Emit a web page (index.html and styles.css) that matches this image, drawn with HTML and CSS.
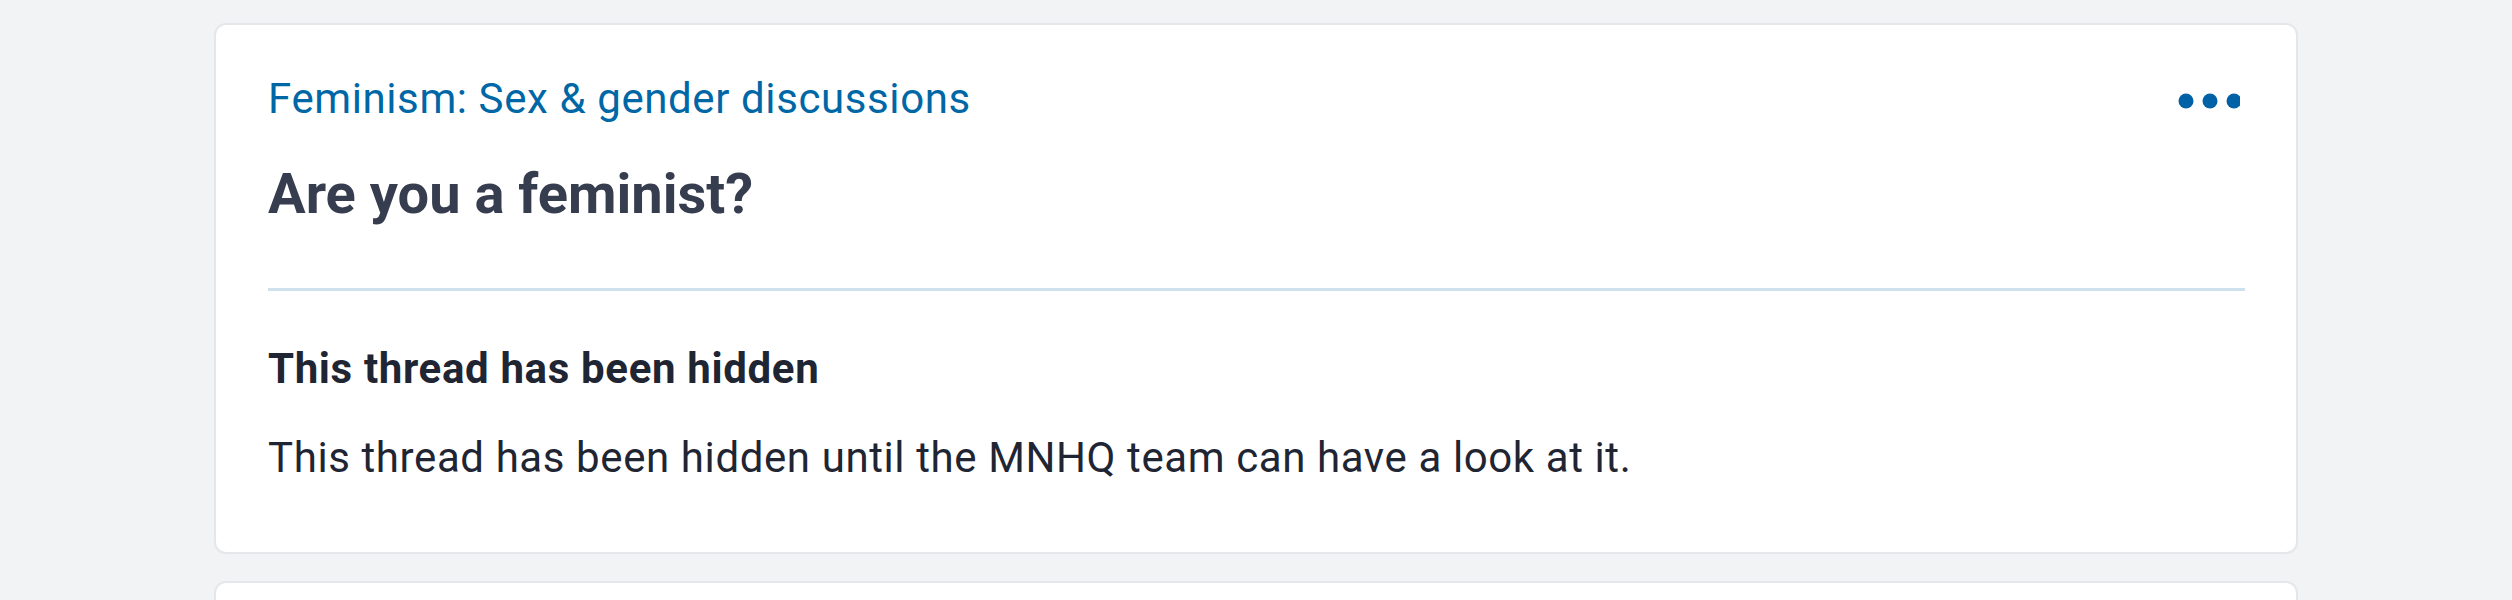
FILE: index.html
```html
<!DOCTYPE html>
<html lang="en">
<head>
<meta charset="utf-8">
<title>Are you a feminist?</title>
<link rel="stylesheet" href="styles.css">
</head>
<body>
<main class="feed">
  <article class="card">
    <header class="card-head">
      <div class="head-row">
        <a class="topic" href="#">Feminism: Sex &amp; gender discussions</a>
        <button class="more" aria-label="More options">
          <svg width="62" height="16" viewBox="0 0 62 16" aria-hidden="true">
            <circle cx="8" cy="8" r="7.5" fill="#0061a6"/>
            <circle cx="32" cy="8" r="7.5" fill="#0061a6"/>
            <circle cx="56" cy="8" r="7.5" fill="#0061a6"/>
          </svg>
        </button>
      </div>
      <h1 class="title">Are you a feminist?</h1>
    </header>
    <section class="card-body">
      <h2 class="notice-title">This thread has been hidden</h2>
      <p class="notice-text">This thread has been hidden until the MNHQ team can have a look at it.</p>
    </section>
  </article>
  <article class="card card-next"></article>
</main>
</body>
</html>
```
FILE: styles.css
```css
html, body {
  margin: 0;
  padding: 0;
  background: #f2f3f5;
  font-family: Roboto, "Liberation Sans", Arial, sans-serif;
}

body {
  height: 600px;
  overflow: hidden;
}

.feed {
  width: 2084px;
  margin-left: 214px;
  padding-top: 23px;
  display: flex;
  flex-direction: column;
  gap: 27px;
}

.card {
  box-sizing: border-box;
  background: #ffffff;
  border: 2px solid #e5e7eb;
  border-radius: 12px;
  padding: 42px 51px 63px 52px;
}

.card-next {
  height: 20px;
  padding: 0;
  flex-shrink: 0;
  border-bottom: 0;
  border-radius: 12px 12px 0 0;
}

.card-head {
  border-bottom: 3px solid #cfe1ec;
  padding-bottom: 55px;
}

.head-row {
  display: flex;
  justify-content: space-between;
  align-items: flex-start;
}

.topic {
  font-size: 42px;
  line-height: 63px;
  letter-spacing: 0.6px;
  color: #0067a6;
  text-decoration: none;
}

.more {
  border: 0;
  background: none;
  padding: 0;
  margin: 26px 5px 0 0;
  display: flex;
  cursor: pointer;
}

.title {
  margin: 25px 0 0;
  font-size: 56px;
  line-height: 78px;
  font-weight: 700;
  color: #363d4f;
}

.card-body {
  padding-top: 46px;
}

.notice-title {
  margin: 0;
  font-size: 42px;
  line-height: 63px;
  font-weight: 700;
  letter-spacing: 0.65px;
  color: #1f2533;
}

.notice-text {
  margin: 26px 0 0;
  font-size: 42px;
  line-height: 63px;
  letter-spacing: 0.6px;
  color: #1f2533;
}
```
